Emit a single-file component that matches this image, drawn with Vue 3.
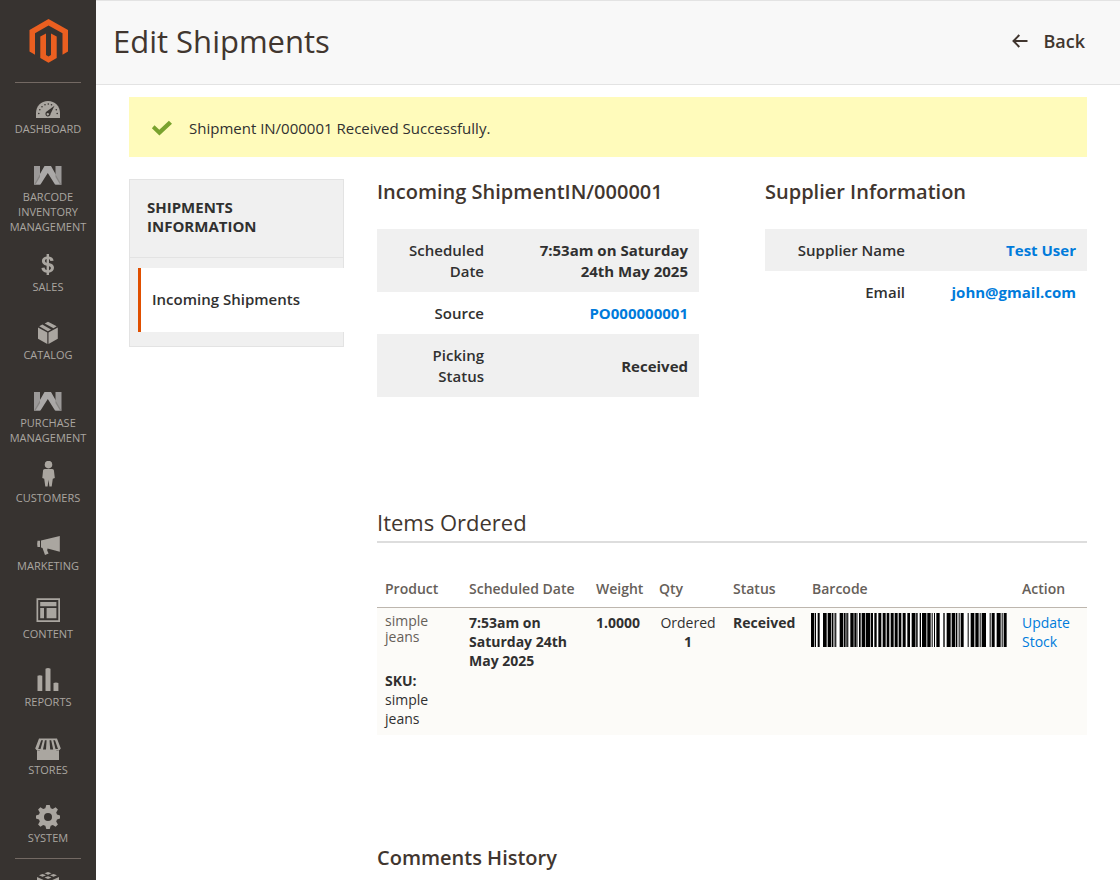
<template>
  <div class="admin">
    <nav class="menu" aria-label="Main menu">
      <a class="menu-logo" href="#" aria-label="Magento Admin Panel">
        <svg width="40" height="44" viewBox="0 0 40 44">
          <path d="M20.500 0 40 11V32.500L34.500 35.700V14.200L20.500 6.400 7 14.200V35.700L1.500 32.500V11z" fill="#eb5f20" />
          <path d="M18 14.400V36L20.500 37.600 23 36V14.400L28.700 17.500V38.900L20.500 43.800 12.300 38.900V17.500z" fill="#eb5f20" />
        </svg>
      </a>
      <ul class="menu-list">
        <li v-for="item in menu" :key="item.label" class="menu-item">
          <a href="#" class="menu-link">
            <svg class="menu-icon" viewBox="0 0 28 28" aria-hidden="true">
              <path v-for="(p, i) in icons[item.icon]" :key="i" :d="p.d" :fill="p.fill || '#aaa6a0'" fill-rule="evenodd" />
            </svg>
            <span class="menu-label">{{ item.label }}</span>
          </a>
        </li>
      </ul>
      <a class="menu-more" href="#" aria-label="Find Partners &amp; Extensions">
        <svg width="28" height="28" viewBox="0 0 28 28">
          <path v-for="(p, i) in icons.partners" :key="i" :d="p.d" fill="#aaa6a0" />
        </svg>
      </a>
    </nav>

    <div class="page">
      <header class="page-header">
        <h1 class="page-title">Edit Shipments</h1>
        <button type="button" class="back">
          <svg width="16" height="14" viewBox="0 0 16 14" fill="none" stroke="#41362f" stroke-width="2">
            <path d="M15.500 7H1.500M7.300 1 1.500 7l5.800 6" />
          </svg>
          Back
        </button>
      </header>

      <main class="content">
        <div class="message" role="status">
          <svg width="22" height="16" viewBox="0 0 22 16">
            <path d="M3.500 5.300 8.300 9.700 17.900.7 21 3.700 8.400 15.600.9 8.200z" fill="#79a22e" />
          </svg>
          <span>Shipment IN/000001 Received Successfully.</span>
        </div>

        <div class="columns">
          <aside class="tabs">
            <h2 class="tabs-title">Shipments Information</h2>
            <a href="#" class="tab-active">Incoming Shipments</a>
          </aside>

          <div class="details">
            <div class="info">
              <section v-for="block in blocks" :key="block.title">
                <h3 class="info-title">{{ block.title }}</h3>
                <table class="info-table" :class="block.type">
                  <tbody>
                    <tr v-for="row in block.rows" :key="row.label">
                      <th scope="row">{{ row.label }}</th>
                      <td>
                        <a v-if="row.link" href="#">{{ row.value }}</a>
                        <template v-else>{{ row.value }}</template>
                      </td>
                    </tr>
                  </tbody>
                </table>
              </section>
            </div>

            <section class="items">
              <h3 class="items-title">Items Ordered</h3>
              <table class="items-table">
                <colgroup>
                  <col class="col-product" />
                  <col class="col-date" />
                  <col class="col-weight" />
                  <col class="col-qty" />
                  <col class="col-status" />
                  <col />
                  <col class="col-action" />
                </colgroup>
                <thead>
                  <tr>
                    <th v-for="name in headings" :key="name" scope="col">{{ name }}</th>
                  </tr>
                </thead>
                <tbody>
                  <tr>
                    <td>
                      <div class="product-name">simple jeans</div>
                      <div class="sku"><strong>SKU:</strong><br />simple jeans</div>
                    </td>
                    <td><strong>7:53am on Saturday 24th May 2025</strong></td>
                    <td><strong>1.0000</strong></td>
                    <td class="qty">Ordered<br /><strong>1</strong></td>
                    <td><strong>Received</strong></td>
                    <td class="barcode-cell">
                      <svg class="barcode" viewBox="0 0 588 102" preserveAspectRatio="none" role="img" aria-label="Barcode">
                        <rect width="588" height="102" fill="#fff" />
                        <rect v-for="([x, w, grey], i) in bars" :key="i" :x="x" y="0" :width="w" height="102" :fill="grey ? '#888' : '#000'" />
                      </svg>
                    </td>
                    <td><a href="#">Update Stock</a></td>
                  </tr>
                </tbody>
              </table>
            </section>

            <h3 class="comments-title">Comments History</h3>
          </div>
        </div>
      </main>
    </div>
  </div>
</template>

<script setup>
const menu = [
  { label: 'Dashboard', icon: 'dashboard' },
  { label: 'Barcode Inventory Management', icon: 'webkul' },
  { label: 'Sales', icon: 'sales' },
  { label: 'Catalog', icon: 'catalog' },
  { label: 'Purchase Management', icon: 'webkul' },
  { label: 'Customers', icon: 'customers' },
  { label: 'Marketing', icon: 'marketing' },
  { label: 'Content', icon: 'content' },
  { label: 'Reports', icon: 'reports' },
  { label: 'Stores', icon: 'stores' },
  { label: 'System', icon: 'system' }
]

const dark = '#373330'

function dot(x, y) {
  return `M${x - 0.8} ${y}a.8.8 0 1 0 1.600 0a.8.8 0 1 0-1.600 0z`
}

const icons = {
  dashboard: [
    { d: 'M2 26V21C2 14 7 9 14 9S26 14 26 21V26z' },
    { d: [dot(4.8, 21.5), dot(5.8, 17.7), dot(8, 14.7), dot(11, 12.8), dot(14.3, 12), dot(17.5, 12.7), dot(22.3, 17.7), dot(23.2, 21.5)].join(''), fill: dark },
    { d: 'M20.500 13.800 16.600 21.700A2.600 2.600 0 1 1 12.300 19.800zM13.600 21a1.200 1.200 0 1 0 1 2.100 1.200 1.200 0 0 0-1-2.100z', fill: dark }
  ],
  webkul: [
    { d: 'M0 6H6V24.500H0zM21.500 6H27.500V24.500H21.500z', fill: '#9b9998' },
    { d: 'M6.500 24.500H0L10.500 6H17L27.500 24.500H21L13.800 13z', fill: '#aaa8a7' },
    { d: 'M6 14V17L1.500 24.500H0zM21.500 14V17L26 24.500H27.500z', fill: '#868482' }
  ],
  sales: [
    { d: 'M12.600 4H15V6.500C17.500 6.800 19.300 8.300 19.600 10.700L16.400 11C16.200 10 15.700 9.400 15 9.100V12.900C18.600 13.800 20 15.300 20 17.800 20 20.500 18 22.300 15 22.700V25H12.600V22.700C9.700 22.400 7.800 20.800 7.400 17.900L10.600 17.500C10.800 18.800 11.500 19.700 12.600 20.100V15.700C9.300 14.800 7.900 13.300 7.900 11 7.900 8.500 9.700 6.800 12.600 6.500zM12.600 9.100C11.500 9.400 11 10 11 10.900 11 11.700 11.500 12.300 12.600 12.700zM15 16.200V20.200C16.200 19.900 16.900 19.200 16.900 18.100 16.900 17.100 16.300 16.600 15 16.200z' }
  ],
  catalog: [
    { d: 'M4 9.500 13.300 14.500V26L4 20.800zM23.800 9.500V20.800L14.500 26V14.500z' },
    { d: 'M5.200 8.200 8.300 6.500 17 11.500 13.900 13.200zM10.700 5.400 14 3.700 22.700 8.200 19.500 10.200z' }
  ],
  customers: [
    { d: 'M14.500-.2a3.800 3.800 0 1 1 0 7.600 3.800 3.800 0 0 1 0-7.600z' },
    { d: 'M10.800 8H18.200C19.300 8 20 8.800 20 10L20.800 17 18.800 17.800 17.700 25.500H15.400L14.500 18.800 13.600 25.500H11.300L10.200 17.800 8.300 17 9 10C9 8.800 9.700 8 10.800 8z' }
  ],
  marketing: [
    { d: 'M3.500 11.700H6V18H3.500Q2.800 15 3.500 11.700zM7 11.500 25.800 7V22.800L13.500 19.500 13.200 21.500 14.600 24.500 11 26 8.500 19 7 18.600z' }
  ],
  content: [
    { d: 'M2.500 1.200H26V25H2.500zM4.200 2.900V23.300H24.300V2.900z' },
    { d: 'M6.200 5H22.400V9.300H6.200zM6.200 11H10V21.300H6.200zM12.600 11H22.400V21.300H12.600z' }
  ],
  reports: [
    { d: 'M3.500 10.700Q5.800 9.700 8.300 10.700V26H3.500zM11.500 3.700Q14 2.300 16.500 3.700V26H11.500zM19.500 18Q22 17 24.400 18V26H19.500z' }
  ],
  stores: [
    { d: 'M5 5.500H23L26.800 15.500Q25 18.500 22.600 17 20 18.500 18 17 16 18.500 14 17 12 18.500 10 17 8 18.500 5.600 17 3 18.500 1.200 15.500z' },
    { d: 'M7.200 7.200H9L6.500 16H4.200zM10.900 7.200H12.600L12 16.500H9zM15.500 7.200H17.200L19.200 16.500H16.200zM19.300 7.200H21L24 16H21.500z', fill: dark },
    { d: 'M3 17Q4.500 18.500 6 17H22Q24 18.500 25 17V27H3z' }
  ],
  system: [
    { d: 'M12.300 4H15.700L16.700 7.200 18.800 8 21.600 6.300 23.900 8.600 22.200 11.500 23 13.600 26 14.400V17.600L23 18.500 22.200 20.600 23.900 23.400 21.600 25.700 18.800 24 16.700 24.800 15.700 28H12.300L11.300 24.800 9.200 24 6.400 25.700 4.100 23.400 5.800 20.600 5 18.500 2 17.600V14.400L5 13.600 5.800 11.500 4.100 8.600 6.400 6.300 9.200 8 11.300 7.200zM14 12a4 4 0 1 0 0 8 4 4 0 0 0 0-8z' }
  ],
  partners: [
    { d: 'M14 1 17.500 2.300 14 3.700 10.500 2.300zM8.500 3 12 4.300 8.500 5.700 5 4.300zM19.500 3 23 4.300 19.500 5.700 16 4.300zM14 5.200 17.500 6.600 14 8 10.500 6.600z' },
    { d: 'M3 6 8 8.200 13 10.500V22L3 17zM25 6 20 8.200 15 10.500V22L25 17z' }
  ]
}

const blocks = [
  {
    title: 'Incoming ShipmentIN/000001',
    type: 'shipment',
    rows: [
      { label: 'Scheduled Date', value: '7:53am on Saturday 24th May 2025' },
      { label: 'Source', value: 'PO000000001', link: true },
      { label: 'Picking Status', value: 'Received' }
    ]
  },
  {
    title: 'Supplier Information',
    type: 'supplier',
    rows: [
      { label: 'Supplier Name', value: 'Test User', link: true },
      { label: 'Email', value: 'john@gmail.com', link: true }
    ]
  }
]

const headings = ['Product', 'Scheduled Date', 'Weight', 'Qty', 'Status', 'Barcode', 'Action']

// [x, width, grey]
const bars = [
  [0, 10], [12, 3], [20, 6], [36, 11], [50, 10], [62, 5], [67, 10, 1], [72, 2],
  [86, 10], [98, 6], [104, 9, 1], [107, 3], [118, 10], [130, 7], [137, 4, 1],
  [144, 5], [152, 11], [165, 13], [180, 6], [190, 7], [202, 9], [215, 9],
  [227, 8], [239, 9], [251, 9], [263, 8], [275, 9], [289, 8], [302, 10],
  [312, 9, 1], [316, 3], [326, 4], [333, 13], [346, 3, 1], [349, 10], [362, 3],
  [369, 3], [376, 10], [397, 4], [407, 12], [422, 10], [434, 5], [443, 3],
  [449, 9], [470, 3], [479, 11], [493, 10], [506, 3], [512, 13], [536, 3],
  [542, 9], [557, 12], [572, 3], [578, 9]
]
</script>

<style>
body {
  margin: 0;
}
</style>

<style scoped>
.admin {
  display: flex;
  height: 100vh;
  overflow: hidden;
  background: #fff;
  color: #303030;
  font-family: 'Open Sans', 'Noto Sans', sans-serif;
  font-size: 14px;
  line-height: 19px;
}

a {
  color: #007bdb;
  text-decoration: none;
}

h1,
h2,
h3 {
  margin: 0;
}

.menu {
  flex: 0 0 96px;
  background: #373330;
}

.menu-logo {
  display: flex;
  justify-content: center;
  margin: 0 15px;
  padding: 19px 0;
  border-bottom: 1px solid #736963;
}

.menu-list {
  list-style: none;
  margin: 6px 0 0;
  padding: 0;
}

.menu-link {
  display: flex;
  flex-direction: column;
  align-items: center;
  gap: 1px;
  box-sizing: border-box;
  min-height: 68px;
  padding: 3px 4px 13px;
  color: #aaa6a0;
  font-size: 11px;
  line-height: 15px;
  text-align: center;
  text-transform: uppercase;
}

.menu-item:last-child .menu-link {
  min-height: 0;
}

.menu-icon {
  width: 28px;
  height: 28px;
  flex-shrink: 0;
}

.menu-more {
  display: flex;
  justify-content: center;
  margin: 0 15px;
  padding-top: 12px;
  border-top: 1px solid #736963;
}

.page {
  flex: 1;
  min-width: 0;
}

.page-header {
  display: flex;
  align-items: center;
  justify-content: space-between;
  box-sizing: border-box;
  height: 85px;
  padding: 0 35px 4px 17px;
  background: #f8f8f8;
  border-top: 1px solid #e3e3e3;
  border-bottom: 1px solid #e3e3e3;
}

.page-title {
  color: #41362f;
  font-size: 31px;
  font-weight: 400;
  line-height: 40px;
}

.back {
  display: flex;
  align-items: center;
  gap: 15px;
  padding: 0;
  border: 0;
  background: none;
  color: #41362f;
  font: 600 18px/24px 'Open Sans', 'Noto Sans', sans-serif;
  cursor: pointer;
}

.content {
  padding: 12px 33px 0;
}

.message {
  display: flex;
  align-items: center;
  gap: 16px;
  padding: 21px 22px 19px;
  background: #fffbbb;
  font-size: 15px;
  line-height: 20px;
}

.columns {
  display: grid;
  grid-template-columns: 215px 1fr;
  gap: 33px;
  align-items: start;
  margin-top: 22px;
}

.tabs {
  box-sizing: border-box;
  padding-bottom: 14px;
  background: #f0f0f0;
  border: 1px solid #e3e3e3;
}

.tabs-title {
  padding: 18px 17px 21px;
  border-bottom: 1px solid #e3e3e3;
  font-size: 15px;
  font-weight: 700;
  line-height: 19px;
  text-transform: uppercase;
}

.tab-active {
  display: block;
  margin: 10px -1px 0 8px;
  padding: 20px 11px 22px;
  background: #fff;
  border-left: 3px solid #e04f00;
  color: #303030;
  font-size: 15px;
  font-weight: 600;
  line-height: 22px;
}

.info {
  display: grid;
  grid-template-columns: 1fr 1fr;
  gap: 66px;
}

.info-title,
.comments-title {
  color: #41362f;
  font-size: 20px;
  font-weight: 600;
  line-height: 26px;
}

.info-table {
  width: 100%;
  margin-top: 24px;
  border-collapse: collapse;
  table-layout: fixed;
  font-size: 15px;
  line-height: 21px;
}

.info-table th,
.info-table td {
  padding: 11px 11px 10px;
  text-align: right;
}

.info-table th {
  font-weight: 600;
}

.info-table td {
  font-weight: 700;
}

.shipment th {
  width: 96px;
}

.supplier th {
  width: 129px;
}

.info-table tr:nth-child(odd) {
  background: #f0f0f0;
}

.items {
  margin-top: 110px;
}

.items-title {
  padding-bottom: 4px;
  border-bottom: 2px solid #ddd;
  color: #41362f;
  font-size: 22px;
  font-weight: 400;
  line-height: 30px;
}

.items-table {
  width: 100%;
  margin-top: 27px;
  border-collapse: collapse;
  table-layout: fixed;
}

.items-table th {
  padding: 9px 8px;
  border-bottom: 1px solid #bdb6ae;
  color: #666059;
  font-weight: 600;
  text-align: left;
  white-space: nowrap;
}

.items-table td {
  padding: 5px 8px 7px;
  background: #fcfbf8;
  vertical-align: top;
}

.items-table .barcode-cell {
  padding: 5px 7px;
}

.col-product {
  width: 84px;
}

.col-date {
  width: 127px;
}

.col-weight {
  width: 63px;
}

.col-qty {
  width: 74px;
}

.col-status {
  width: 79px;
}

.col-action {
  width: 73px;
}

.product-name {
  color: #666059;
  line-height: 16px;
}

.sku {
  margin-top: 26px;
}

.items-table .qty {
  text-align: center;
}

.barcode {
  display: block;
  width: 100%;
  height: 34px;
}

.comments-title {
  margin-top: 110px;
}
</style>
